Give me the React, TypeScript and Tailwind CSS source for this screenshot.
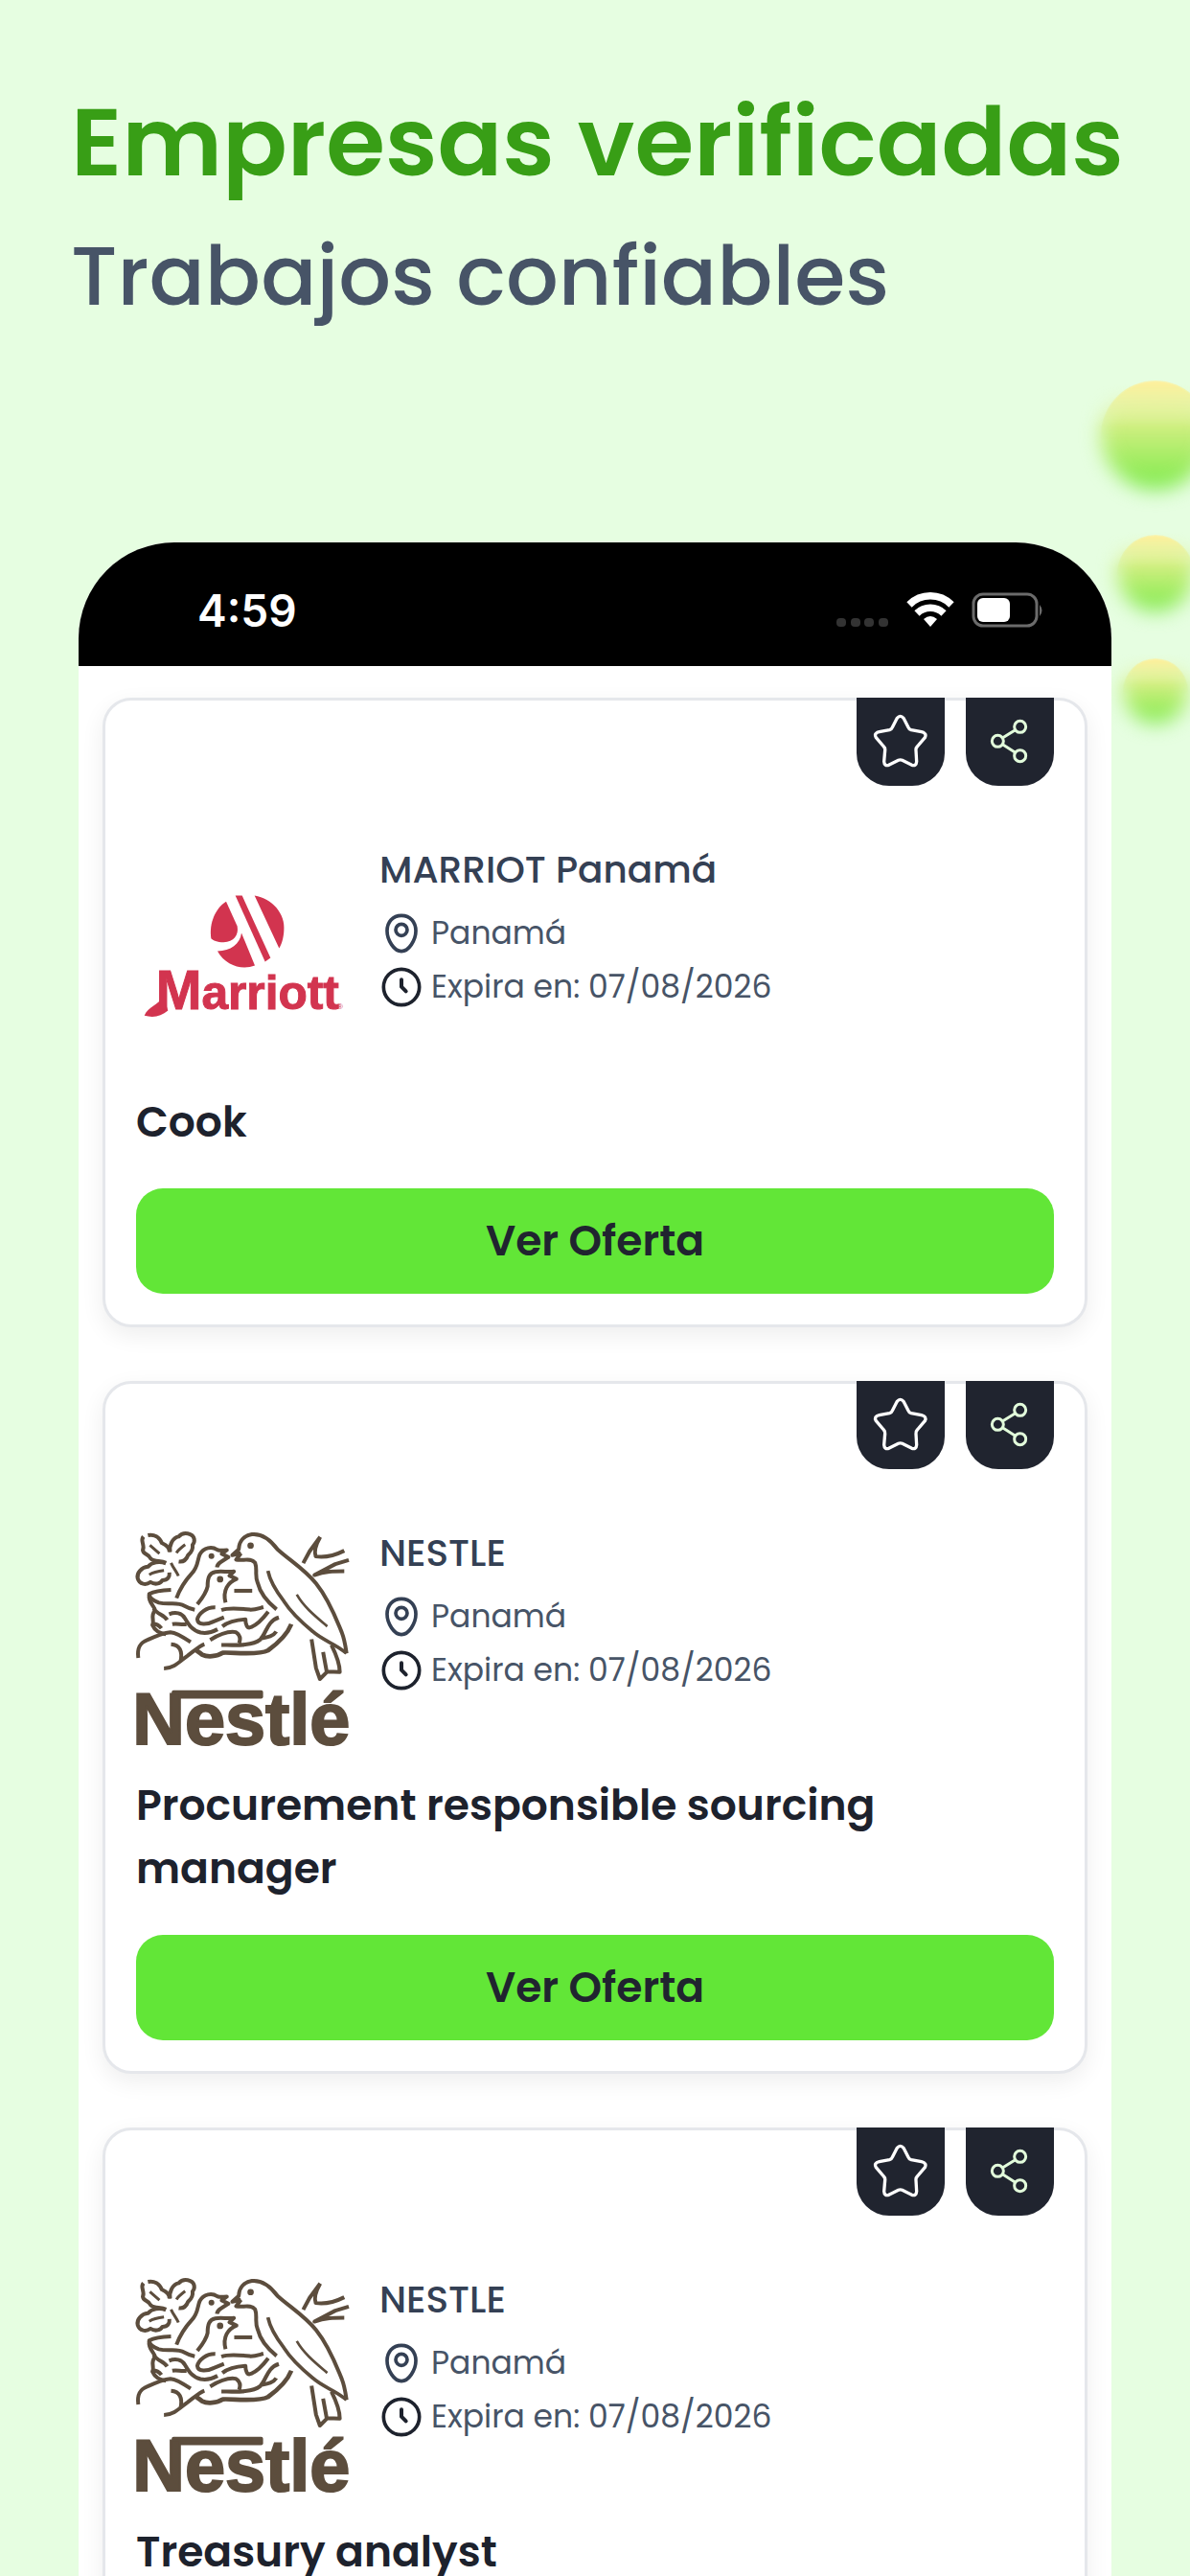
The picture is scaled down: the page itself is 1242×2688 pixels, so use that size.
import React from "react";

type Offer = {
  id: number;
  company: string;
  brand: "marriott" | "nestle";
  city: string;
  expires: string;
  title: string;
};

const offers: Offer[] = [
  { id: 1, company: "MARRIOT Panamá", brand: "marriott", city: "Panamá", expires: "07/08/2026", title: "Cook" },
  { id: 2, company: "NESTLE", brand: "nestle", city: "Panamá", expires: "07/08/2026", title: "Procurement responsible sourcing manager" },
  { id: 3, company: "NESTLE", brand: "nestle", city: "Panamá", expires: "07/08/2026", title: "Treasury analyst" },
];

function MarriottLogo() {
  return (
    <svg viewBox="36 -42 666 663" className="size-[222px] shrink-0" role="img" aria-label="Marriott">
      <g fill="#d2344f">
        <path d="M318 121 L353 198 C358 226 342 247 310 248 C290 248 277 242 271 236 C264 190 284 142 318 121Z" />
        <path d="M366 219 L408 321 C368 336 316 322 291 276 C332 275 362 254 366 219Z" />
        <path d="M347 102 L368 102 L457 297 L440 309Z" />
        <path d="M407 102 C462 110 505 160 499 212 C498 235 491 256 484 267Z" />
        <path d="M62 478 C74 450 104 446 122 418 L136 462 C114 480 92 486 62 478Z" />
        <text x="98" y="458" fontSize="149" fontWeight="700" fontFamily="Liberation Sans, sans-serif" stroke="#d2344f" strokeWidth="3">
          <tspan fontSize="172">M</tspan>arriott
        </text>
        <text x="666" y="458" fontSize="24" fontFamily="Liberation Sans, sans-serif">
          ®
        </text>
      </g>
    </svg>
  );
}

function NestleLogo() {
  return (
    <svg viewBox="39 57 663 663" className="size-[222px] shrink-0 overflow-visible" role="img" aria-label="Nestlé">
      <g fill="none" stroke="#5c4d3d" strokeWidth="12" strokeLinejoin="round">
        {/* leaves */}
        <path d="M76 66 C96 62 112 72 119 90 C132 96 144 104 143 118 M62 70 C50 84 68 96 60 112 C62 128 78 122 84 138 C98 152 116 142 132 152" />
        <path d="M145 118 C142 98 152 74 172 70 C184 56 200 60 208 63 C222 68 224 86 215 96 C218 114 208 122 201 128 C196 142 186 150 172 148" />
        <path d="M132 154 C112 146 88 150 76 164 C56 166 40 184 44 200 C50 220 70 222 84 212 C100 222 116 216 121 206 C138 206 144 196 143 182" />
        <path d="M82 97 L112 123 M192 95 C180 104 170 112 165 121 M80 189 C95 180 110 178 126 176 M148 152 C156 170 166 180 171 193" strokeWidth="9" />
        {/* chicks */}
        <path d="M165 262 C175 235 190 210 212 186 C234 164 230 140 238 125 C250 104 275 100 292 111 C302 116 312 112 322 112 L306 124 L327 134 L305 148 C298 152 292 158 291 166" />
        <path d="M230 281 C245 262 258 246 262 225 C262 200 266 184 286 180 C306 176 324 182 344 179 L330 192 L352 202 C326 212 308 238 318 276" />
        <path d="M345 239 H401" />
        {/* mother bird */}
        <path d="M366 122 L339 128 L359 110 C360 84 376 67 400 63 C430 60 458 80 480 110 C520 146 562 170 600 216 C642 268 664 330 680 368 C690 394 692 414 695 434" />
        <path d="M366 122 L351 142 C372 147 396 134 410 152 C418 172 408 192 418 214 C426 248 446 272 477 297" />
        <path d="M450 177 C458 216 480 246 500 272 C524 310 556 338 590 366 C620 394 662 404 695 434" strokeWidth="11" />
        <path d="M540 251 C562 290 600 320 635 350" strokeWidth="8" />
        <path d="M586 390 L600 480 L612 514 L635 491 L674 492 C674 464 664 440 648 408 M622 430 L633 490" />
        {/* branches */}
        <path d="M560 153 L580 116 L613 71 M613 71 C600 94 592 114 599 132 C624 136 652 132 688 114 M702 143 L660 156 L595 190 C628 178 656 178 688 178" />
        {/* nest */}
        <path d="M148 236 C120 237 96 240 80 249 C80 264 94 270 110 276 C140 284 166 272 190 286 C202 293 212 296 222 298" />
        <path d="M80 252 C76 276 98 288 98 300 C82 320 98 330 90 346 C98 364 114 372 132 374 M94 294 C104 312 126 314 136 330 M92 342 C104 342 112 348 118 356" />
        <path d="M142 312 C162 304 182 308 191 324 C204 346 214 362 240 369 C260 373 280 366 293 359 M152 343 C168 340 180 346 196 343" />
        <path d="M286 291 C258 290 234 310 230 328 C232 348 262 344 280 335 L313 322" />
        <path d="M305 299 C330 290 370 295 396 298 C412 298 424 293 436 290" />
        <path d="M308 350 C328 334 350 330 380 328 C380 346 386 358 398 352 C418 344 436 324 451 304" />
        <path d="M270 392 C300 374 328 364 350 368 C362 376 366 388 360 402 M305 408 C345 408 400 412 425 392 C446 372 446 334 484 322 M425 388 C446 384 466 382 476 366" />
        <path d="M523 343 C510 376 482 402 450 425 C420 441 340 430 310 432 C290 445 260 446 245 438 C235 430 228 426 222 421" strokeWidth="14" />
        <path d="M46 448 C42 420 48 402 75 392 C100 380 124 370 146 368 C168 370 190 386 209 399 M148 406 C176 408 184 428 178 458 M126 481 C160 480 178 456 200 441 C220 426 238 410 252 405" />
      </g>
      <g fill="#5c4d3d">
        <circle cx="274" cy="131" r="9" />
        <circle cx="301" cy="203" r="10" />
        <circle cx="396" cy="98" r="10" />
        <rect x="150" y="549" width="285" height="26" rx="6" />
        <text x="28" y="717" fontSize="226" fontWeight="700" fontFamily="Liberation Sans, sans-serif" stroke="#5c4d3d" strokeWidth="6">
          Nestlé
        </text>
      </g>
    </svg>
  );
}

function StarIcon() {
  return (
    <svg viewBox="0 0 276 276" className="size-full" fill="none" stroke="#ffffff" strokeWidth="10" strokeLinejoin="round" aria-hidden="true">
      <path d="M127 64 Q137 52 147 64 L162 93 Q164 99 171 101 L203 107 Q221 111 214 125 L190 153 Q185 158 186 165 L188 200 Q187 215 173 211 L143 196 Q137 193 131 196 L101 211 Q87 215 86 200 L89 165 Q90 158 85 153 L61 125 Q53 111 71 107 L103 101 Q110 99 112 93Z" />
    </svg>
  );
}

function ShareIcon() {
  return (
    <svg viewBox="0 0 276 276" className="size-full" fill="none" stroke="#e2fcdb" strokeWidth="9" aria-hidden="true">
      <circle cx="170" cy="91" r="18" />
      <circle cx="100" cy="136" r="18" />
      <circle cx="170" cy="182" r="18" />
      <path d="M115 126 L155 101 M115 146 L155 172" />
    </svg>
  );
}

function PinIcon() {
  return (
    <svg viewBox="-6 -6 138 138" className="size-[46px] shrink-0" fill="none" stroke="#344054" strokeWidth="11" aria-hidden="true">
      <path d="M63 7 C35 7 18 28 18 55 C18 84 40 119 63 119 C86 119 108 84 108 55 C108 28 91 7 63 7Z" />
      <circle cx="63" cy="52" r="18" />
    </svg>
  );
}

function ClockIcon() {
  return (
    <svg viewBox="-6 -6 138 138" className="size-[46px] shrink-0" fill="none" stroke="#1d222d" strokeWidth="11" aria-hidden="true">
      <circle cx="63" cy="63" r="56" />
      <path d="M63 40 V62 L77 76" strokeWidth="12" strokeLinecap="round" strokeLinejoin="round" />
    </svg>
  );
}

function StatusBar() {
  return (
    <div className="flex h-[129px] items-center justify-between bg-black pt-3 pr-[71px] pl-[124px]">
      <time className="font-['Inter',sans-serif] text-[46px] leading-[56px] font-semibold text-white">4:59</time>
      <svg viewBox="0 0 218 40" className="h-10 w-[218px]" aria-hidden="true">
        <g fill="#333333">
          <rect x="2" y="28" width="10" height="9" rx="4" />
          <rect x="17" y="28" width="10" height="9" rx="4" />
          <rect x="31" y="28" width="10" height="9" rx="4" />
          <rect x="46" y="28" width="10" height="9" rx="4" />
        </g>
        <g fill="none" stroke="#ffffff" strokeWidth="7.5">
          <path d="M78 14 A31 31 0 0 1 122 14" />
          <path d="M86 23 A20 20 0 0 1 114 23" />
        </g>
        <path d="M93 29 Q100 23 107 29 L100 37Z" fill="#ffffff" />
        <rect x="145" y="3" width="66" height="33" rx="10" fill="none" stroke="#6b6b6b" strokeWidth="3" />
        <rect x="149" y="7" width="34" height="25" rx="6" fill="#ffffff" />
        <path d="M214 14 Q219 20 214 26Z" fill="#6b6b6b" />
      </svg>
    </div>
  );
}

function Orb({ size }: { size: string }) {
  return (
    <div className={`relative ${size}`}>
      <div className="absolute -inset-8 p-8 [mask-image:linear-gradient(to_bottom,transparent_20%,black_45%)]">
        <div className="size-full rounded-full bg-linear-to-b from-[#fff09f] to-[#77ea48] blur-[10px]" />
      </div>
      <div className="absolute inset-0 rounded-full bg-linear-to-b from-[#fff09f] to-[#8eee63] blur-[1px] [mask-image:linear-gradient(to_bottom,black_5%,transparent_55%)]" />
    </div>
  );
}

function OfferCard({ offer }: { offer: Offer }) {
  return (
    <article className="relative rounded-[30px] border-[3px] border-[#e5e7eb] bg-white px-8 pt-[155px] pb-8 shadow-[0_8px_24px_rgba(0,0,0,0.07)]">
      <div className="absolute -top-[3px] right-8 flex gap-[22px]">
        <button type="button" aria-label="Guardar oferta" className="size-[92px] rounded-b-[34px] bg-[#20242f]">
          <StarIcon />
        </button>
        <button type="button" aria-label="Compartir oferta" className="size-[92px] rounded-b-[34px] bg-[#20242f]">
          <ShareIcon />
        </button>
      </div>
      <div className="flex gap-8">
        {offer.brand === "marriott" ? <MarriottLogo /> : <NestleLogo />}
        <div className="flex min-w-0 flex-col text-[#475467]">
          <h2 className="mb-4 text-[39px] leading-[44px] font-medium text-[#344054]">{offer.company}</h2>
          <p className="flex items-center gap-2 text-[33px] leading-[56px]">
            <PinIcon />
            {offer.city}
          </p>
          <p className="flex items-center gap-2 text-[33px] leading-[56px]">
            <ClockIcon />
            Expira en: {offer.expires}
          </p>
        </div>
      </div>
      <h3 className="mt-[30px] mb-9 text-[44px] leading-[66px] font-semibold text-[#1d222d]">{offer.title}</h3>
      <button type="button" className="block h-[110px] w-full rounded-[28px] bg-[#62e637] text-[44px] leading-[66px] font-semibold text-[#20242f]">
        Ver Oferta
      </button>
    </article>
  );
}

export default function App() {
  return (
    <main className="relative h-screen overflow-hidden bg-[#e6fee1] font-['Poppins','Inter',sans-serif]">
      <header className="px-[74px] pt-[78px] whitespace-nowrap">
        <h1 className="text-[100px] leading-[140px] font-semibold text-[#389e16]">Empresas verificadas</h1>
        <p className="text-[86px] leading-[140px] font-medium text-[#475467]">Trabajos confiables</p>
      </header>
      <div className="absolute top-[397px] right-0 flex translate-x-[21px] flex-col items-center" aria-hidden="true">
        <Orb size="mb-[47px] size-[114px]" />
        <Orb size="mb-[49px] size-[80px]" />
        <Orb size="size-[68px]" />
      </div>
      <section className="relative mx-[82px] mt-[208px] overflow-hidden rounded-t-[100px] bg-white">
        <StatusBar />
        <div className="flex flex-col gap-14 px-[25px] pt-[33px] pb-14">
          {offers.map((offer) => (
            <OfferCard key={offer.id} offer={offer} />
          ))}
        </div>
      </section>
    </main>
  );
}
